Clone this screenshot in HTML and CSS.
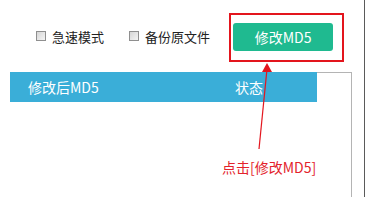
FILE: index.html
```html
<!DOCTYPE html>
<html lang="zh-CN">
<head>
    <meta charset="UTF-8">
    <title>修改MD5</title>
    <link rel="stylesheet" href="styles.css">
</head>
<body>
    <div class="panel">
        <div class="toolbar">
            <label class="check"><span class="box"></span>急速模式</label>
            <label class="check check-second"><span class="box"></span>备份原文件</label>
            <button class="btn-md5">修改MD5</button>
        </div>
        <div class="table">
            <div class="thead">
                <span class="col-md5">修改后MD5</span>
                <span class="col-state">状态</span>
            </div>
        </div>

        <!-- 标注 -->
        <div class="mark-box"></div>
        <svg class="mark-arrow" width="20" height="90" viewBox="0 0 20 90">
            <line x1="12" y1="6" x2="4" y2="86" stroke="#e3151d" stroke-width="1.2"/>
            <polygon points="12,0 7,9 17,9" fill="#e3151d"/>
        </svg>
        <div class="mark-text">点击[修改MD5]</div>
    </div>
</body>
</html>
```

FILE: styles.css
```css
body {
    margin: 0;
    background: #ffffff;
    font-family: "Noto Sans CJK SC", "Noto Sans", sans-serif;
}

.panel {
    position: relative;
    width: 364px;
    height: 197px;
    border-right: 1px solid #5a5a5a;
}

.toolbar {
    height: 72px;
    display: flex;
    align-items: center;
    padding-left: 36px;
    box-sizing: border-box;
}

.check {
    display: flex;
    align-items: center;
    font-size: 13px;
    color: #222;
    line-height: 1;
}

.check-second {
    margin-left: 25px;
}

.box {
    width: 8px;
    height: 8px;
    border: 1px solid #8f8f8f;
    background: linear-gradient(135deg, #d6d6d6 0%, #f4f4f4 100%);
    margin-right: 6px;
}

.btn-md5 {
    margin-left: 23px;
    margin-top: 2px;
    width: 100px;
    height: 28px;
    border: none;
    border-radius: 3px;
    background: #1fba90;
    color: #ffffff;
    font-family: inherit;
    font-size: 14px;
    padding: 0;
}

.table {
    margin-left: 10px;
    width: 341px;
    height: 125px;
    border-top: 1px solid #b4b4b4;
    border-right: 1px solid #b4b4b4;
}

.thead {
    margin-top: -1px;
    width: 307px;
    height: 30px;
    background: #3aaed8;
    color: #ffffff;
    font-size: 14px;
    display: flex;
    align-items: center;
    padding-left: 18px;
    box-sizing: border-box;
}

.col-md5 {
    width: 207px;
}

.mark-box {
    position: absolute;
    left: 229px;
    top: 13px;
    width: 111px;
    height: 45px;
    border: 2px solid #e3151d;
}

.mark-arrow {
    position: absolute;
    left: 255px;
    top: 63px;
}

.mark-text {
    position: absolute;
    left: 222px;
    top: 157px;
    font-size: 14px;
    color: #e3232b;
}
```
